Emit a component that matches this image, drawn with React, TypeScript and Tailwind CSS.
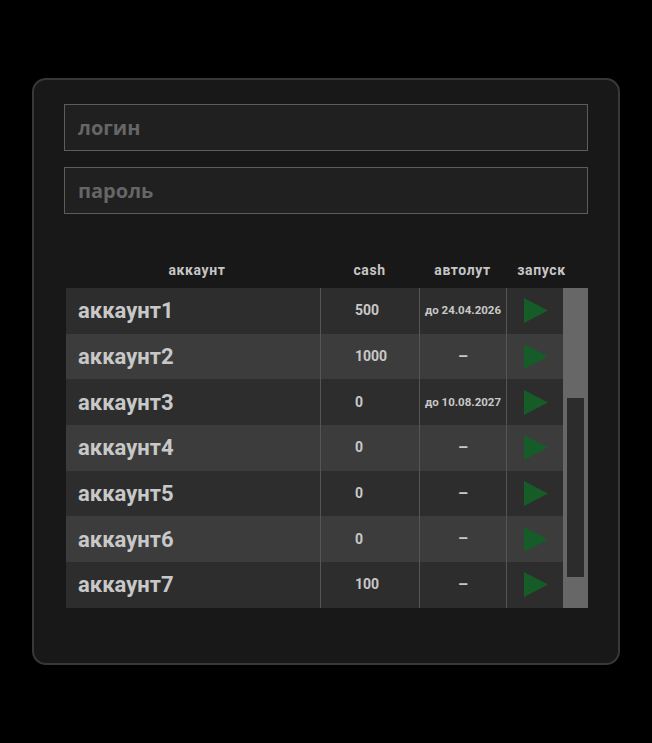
import React from 'react';

interface Account {
  name: string;
  cash: string;
  autoloot: string;
}

const accounts: Account[] = [
  { name: 'аккаунт1', cash: '500', autoloot: 'до 24.04.2026' },
  { name: 'аккаунт2', cash: '1000', autoloot: '' },
  { name: 'аккаунт3', cash: '0', autoloot: 'до 10.08.2027' },
  { name: 'аккаунт4', cash: '0', autoloot: '' },
  { name: 'аккаунт5', cash: '0', autoloot: '' },
  { name: 'аккаунт6', cash: '0', autoloot: '' },
  { name: 'аккаунт7', cash: '100', autoloot: '' },
];

const font = { fontFamily: 'Roboto, "Liberation Sans", sans-serif' };

const PlayIcon = () => (
  <svg width="25" height="25" viewBox="0 0 25 25">
    <polygon points="1,0 25,12.5 1,25" fill="#165c28" />
  </svg>
);

const App = () => {
  return (
    <div className="min-h-screen w-full bg-black flex items-center justify-center">
      <div className="w-[588px] h-[587px] rounded-[14px] border-2 border-[#383838] bg-[#181818] pt-[24px] px-[30px]">
        <input
          placeholder="логин"
          className="block w-full h-[47px] border border-[#5c5c5c] bg-[#202020] px-[13px] text-[20px] font-bold text-[#6a6a6a] placeholder:text-[#666666] outline-none"
          style={{ fontFamily: '"Open Sans", "Noto Sans", sans-serif' }}
        />
        <input
          placeholder="пароль"
          className="block w-full h-[47px] mt-[16px] border border-[#5c5c5c] bg-[#202020] px-[13px] text-[20px] font-bold text-[#6a6a6a] placeholder:text-[#666666] outline-none"
          style={{ fontFamily: '"Open Sans", "Noto Sans", sans-serif' }}
        />

        <div className="mt-[38px] ml-[2px] w-[522px]" style={font}>
          {/* column headings */}
          <div className="flex h-[36px] items-center text-[14px] font-bold tracking-[0.6px] text-[#c6c6c6]">
            <div className="w-[254px] pl-[8px] text-center">аккаунт</div>
            <div className="w-[99px] text-center">cash</div>
            <div className="w-[87px] text-center">автолут</div>
            <div className="w-[65px] pl-[6px] text-center">запуск</div>
          </div>

          <div className="flex">
            <div className="w-[497px]">
              {accounts.map((a, i) => (
                <div
                  key={a.name}
                  className={`flex h-[45.7px] ${i % 2 === 0 ? 'bg-[#2d2d2d]' : 'bg-[#3c3c3c]'}`}
                >
                  <div className="w-[254px] flex items-center pl-[12px] text-[22px] font-bold text-[#c8c8c8]">
                    {a.name}
                  </div>
                  <div className="w-[99px] border-l border-[#555555] flex items-center pl-[34px] text-[14px] font-bold text-[#c8c8c8]">
                    {a.cash}
                  </div>
                  <div className="w-[87px] border-l border-[#555555] flex items-center justify-center text-[11.5px] font-bold text-[#c8c8c8]">
                    {a.autoloot || <span className="text-[16px]">–</span>}
                  </div>
                  <div className="w-[57px] border-l border-[#555555] flex items-center justify-center">
                    <PlayIcon />
                  </div>
                </div>
              ))}
            </div>

            {/* scrollbar */}
            <div className="w-[25px] bg-[#676767] pt-[110px] pb-[31px] px-[4px]">
              <div className="h-full bg-[#2c2c2c]" />
            </div>
          </div>
        </div>
      </div>
    </div>
  );
};

export default App;
